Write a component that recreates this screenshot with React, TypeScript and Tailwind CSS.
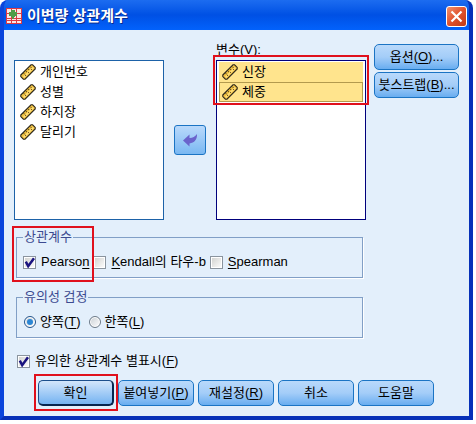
import type { ReactNode } from 'react'
import clsx from 'clsx'

const RulerIcon = () => (
  <svg width="16" height="16" viewBox="0 0 16 16" className="shrink-0">
    <path d="M.8 11 11 .8h1.6l2.6 2.6V5L5 15.2H3.4L.8 12.6z" fill="#f0c040" stroke="#2a261c" strokeWidth="1.1" />
    <path d="M3.6 13.4 13.4 3.6" stroke="#ffdf78" strokeWidth="1.6" />
    <path d="m3.6 9.2 1.2 1.2M5.8 7l1.2 1.2M8 4.8 9.2 6M10.2 2.6l1.2 1.2" stroke="#4a3c1c" strokeWidth="1" />
    <path d="M5 11h1v1H5zM8 8h1v1H8zM11 5h1v1h-1z" fill="#7a5a24" />
  </svg>
)

const AppIcon = () => (
  <svg width="16" height="16" viewBox="0 0 16 16" className="shrink-0">
    <path d="M0 0h16v16H0z" fill="#dc3a44" />
    <path
      d="M1 1h4v4H1zM6 1h4v4H6zM11 1h4v4h-4zM1 6h4v4H1zM6 6h4v4H6zM11 6h4v4h-4zM1 11h4v1H1zM6 11h4v1H6zM11 11h4v1h-4zM1 13h4v2H1zM6 13h4v2H6zM11 13h4v2h-4z"
      fill="#fbe6e4"
    />
    <path d="M5 2h4v2h2v4H9v1H8v2H6V9H5V8H3V4h2z" fill="#4e9e48" />
  </svg>
)

const ArrowIcon = () => (
  <svg width="16" height="14" viewBox="0 0 16 14">
    <path d="M1 7.5 7.5 1.5v3.4C10.5 5 13 3.6 15 1c.3 5.4-2.6 9-7.5 9.4v3.2z" fill="#6a63cc" />
  </svg>
)

// red marker drawn around a group of controls
const Mark = ({ className }: { className: string }) => (
  <span aria-hidden="true" className={clsx('pointer-events-none absolute border-2 border-[#e0101c]', className)} />
)

const VarList = ({ items, selected, label }: { items: string[]; selected?: boolean; label: string }) => (
  <ul
    role="listbox"
    aria-label={label}
    className={clsx('h-40 border bg-white px-0.5 py-px', selected ? 'border-[#00007c]' : 'border-[#1d62a8]')}
  >
    {items.map((name, i) => (
      <li
        key={name}
        role="option"
        aria-selected={!!selected}
        className={clsx(
          'flex h-5 items-center gap-1 border px-0.5',
          selected ? 'bg-[#ffe48d]' : 'border-transparent',
          selected && (i === items.length - 1 ? 'border-[#b39a4e]' : 'border-[#ffe48d]')
        )}
      >
        <RulerIcon />
        {name}
      </li>
    ))}
  </ul>
)

const Button = ({ children, primary, className }: { children: ReactNode; primary?: boolean; className?: string }) => (
  <button
    type="button"
    className={clsx(
      'h-[26px] rounded-[5px] border bg-linear-to-b whitespace-nowrap',
      primary
        ? 'border-[#1c4f8c] border-r-2 border-b-2 border-r-[#06254f] border-b-[#06254f] from-[#d3e6fb] to-[#74b3f1]'
        : 'border-[#1b74c4] from-[#b9d9fb] via-[#a4cdf8] to-[#68adf0]',
      className
    )}
  >
    {children}
  </button>
)

const Check = ({ children, checked }: { children: ReactNode; checked?: boolean }) => (
  <label className="flex items-center gap-[5px] whitespace-nowrap">
    <span className="relative size-[13px] shrink-0">
      <input
        type="checkbox"
        defaultChecked={checked}
        className="peer block size-[13px] appearance-none border border-[#8a949e] bg-linear-to-br from-[#cfd0cd] to-white shadow-[inset_0_0_0_1px_white]"
      />
      <svg viewBox="0 0 13 13" className="pointer-events-none absolute inset-0 hidden peer-checked:block">
        <path d="M2.8 5.6 5.2 10.2 11 2.2" fill="none" stroke="#1b1480" strokeWidth="2.5" />
      </svg>
    </span>
    <span>{children}</span>
  </label>
)

const Radio = ({ children, checked }: { children: ReactNode; checked?: boolean }) => (
  <label className="flex items-center gap-1 whitespace-nowrap">
    <span className="relative size-3 shrink-0">
      <input
        type="radio"
        name="tail"
        defaultChecked={checked}
        className="peer block size-3 appearance-none rounded-full border border-[#6c7a88] bg-linear-to-br from-[#c9cfd4] to-white shadow-[inset_0_0_0_1px_white] checked:border-[#24558c]"
      />
      <span className="pointer-events-none absolute inset-[3px] hidden rounded-full bg-[#2b86d4] peer-checked:block" />
    </span>
    <span>{children}</span>
  </label>
)

const Group = ({ title, children, className }: { title: string; children: ReactNode; className?: string }) => (
  <fieldset
    className={clsx('mr-24 ml-0.5 border border-[#819fc6] px-1.5 pb-1.5 shadow-[1px_1px_0_white]', className)}
  >
    <legend className="h-4 px-px leading-4 text-[#3c4a90]">{title}</legend>
    {children}
  </fieldset>
)

export default function App() {
  return (
    <div className="bg-white pr-[3px] pb-1 font-['Liberation_Sans','Noto_Sans_CJK_KR',sans-serif] text-[13px] leading-[18px] text-black [&_u]:underline-offset-2">
      <div className="overflow-hidden rounded-t-lg border-x-4 border-b-4 border-[#0a45dc] border-r-[#0630b8] border-b-[#0630b8] bg-[#0a45dc]">
        <header className="flex h-[30px] items-center gap-[5px] bg-linear-to-b from-[#1c6cf0] via-[#0050e4] to-[#0262fc] px-0.5 pt-0.5">
          <AppIcon />
          <h1 className="flex-1 text-[15px] font-bold text-white [text-shadow:1px_1px_0_#0a2a8c]">이변량 상관계수</h1>
          <button
            type="button"
            aria-label="닫기"
            className="flex size-[21px] items-center justify-center rounded-[3px] border border-white bg-linear-to-br from-[#f0906c] via-[#e0512c] to-[#c03a14]"
          >
            <svg width="13" height="13" viewBox="0 0 13 13">
              <path d="m1.5 1.5 10 10M11.5 1.5l-10 10" stroke="#fff" strokeWidth="2.2" />
            </svg>
          </button>
        </header>

        <main className="bg-[#e3effb] px-2.5 pt-3 pb-2.5">
          <div className="flex">
            <div className="flex-1 pt-[18px]">
              <VarList label="변수 목록" items={['개인번호', '성별', '하지장', '달리기']} />
            </div>
            <button
              type="button"
              aria-label="이동"
              className="mx-2.5 mt-[83px] flex h-[30px] w-8 items-center justify-center rounded-[3px] border border-[#1b74c4] bg-linear-to-b from-[#b9d9fb] to-[#7ab8f2]"
            >
              <ArrowIcon />
            </button>
            <div className="relative flex-1">
              <div className="h-[18px] leading-4">
                변수(<u>V</u>):
              </div>
              <VarList label="변수" items={['신장', '체중']} selected />
              <Mark className="-inset-x-[3px] top-[13px] h-[50px]" />
            </div>
            <div className="mt-0.5 ml-2 flex w-[85px] flex-col gap-0.5">
              <Button>
                옵션(<u>O</u>)...
              </Button>
              <Button>
                붓스트랩(<u>B</u>)...
              </Button>
            </div>
          </div>

          <div className="relative">
            <Group title="상관계수" className="mt-[9px]">
              <div className="mt-2 flex gap-1">
                <Check checked>
                  Pearso<u>n</u>
                </Check>
                <Check>
                  <u>K</u>endall의 타우-b
                </Check>
                <Check>
                  <u>S</u>pearman
                </Check>
              </div>
            </Group>
            <Mark className="-top-[3px] -bottom-1 -left-0.5 w-[82px]" />
          </div>

          <Group title="유의성 검정" className="mt-[11px]">
            <div className="mt-2 flex gap-2 pl-px">
              <Radio checked>
                양쪽(<u>T</u>)
              </Radio>
              <Radio>
                한쪽(<u>L</u>)
              </Radio>
            </div>
          </Group>

          <div className="mt-3.5 ml-[3px]">
            <Check checked>
              유의한 상관계수 별표시(<u>F</u>)
            </Check>
          </div>

          <div className="mt-2.5 mr-[25px] ml-6 grid grid-cols-5 gap-1">
            <div className="relative grid">
              <Button primary>확인</Button>
              <Mark className="-inset-x-1 -top-1.5 -bottom-[5px]" />
            </div>
            <Button>
              붙여넣기(<u>P</u>)
            </Button>
            <Button>
              재설정(<u>R</u>)
            </Button>
            <Button>취소</Button>
            <Button>도움말</Button>
          </div>
        </main>
      </div>
    </div>
  )
}
